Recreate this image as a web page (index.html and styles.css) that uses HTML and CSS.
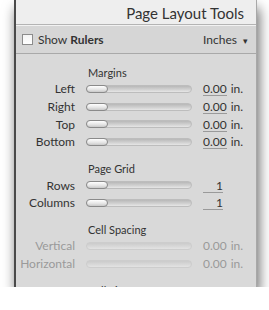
FILE: index.html
```html
<!DOCTYPE html>
<html lang="en">
<head>
    <meta charset="UTF-8">
    <title>Page Layout Tools</title>
    <link rel="stylesheet" href="styles.css">
</head>
<body>

    <div class="panel">
        <div class="titlebar">Page Layout Tools</div>

        <div class="toolbar">
            <label class="check"><span class="box"></span>Show <b>Rulers</b></label>
            <span class="units">Inches <span class="arrow">&#9662;</span></span>
        </div>

        <div class="section first">
            <div class="heading">Margins</div>
            <div class="row">
                <span class="label">Left</span>
                <span class="track"><span class="thumb"></span></span>
                <span class="value"><span class="num">0.00</span><span class="unit">in.</span></span>
            </div>
            <div class="row">
                <span class="label">Right</span>
                <span class="track"><span class="thumb"></span></span>
                <span class="value"><span class="num">0.00</span><span class="unit">in.</span></span>
            </div>
            <div class="row">
                <span class="label">Top</span>
                <span class="track"><span class="thumb"></span></span>
                <span class="value"><span class="num">0.00</span><span class="unit">in.</span></span>
            </div>
            <div class="row">
                <span class="label">Bottom</span>
                <span class="track"><span class="thumb"></span></span>
                <span class="value"><span class="num">0.00</span><span class="unit">in.</span></span>
            </div>
        </div>

        <div class="section">
            <div class="heading">Page Grid</div>
            <div class="row">
                <span class="label">Rows</span>
                <span class="track"><span class="thumb"></span></span>
                <span class="value"><span class="num">1</span></span>
            </div>
            <div class="row">
                <span class="label">Columns</span>
                <span class="track"><span class="thumb"></span></span>
                <span class="value"><span class="num">1</span></span>
            </div>
        </div>

        <div class="section disabled">
            <div class="heading">Cell Spacing</div>
            <div class="row">
                <span class="label">Vertical</span>
                <span class="track"></span>
                <span class="value">0.00<span class="unit">in.</span></span>
            </div>
            <div class="row">
                <span class="label">Horizontal</span>
                <span class="track"></span>
                <span class="value">0.00<span class="unit">in.</span></span>
            </div>
        </div>

        <div class="section">
            <div class="heading">Cell Size</div>
        </div>
    </div>

</body>
</html>
```

FILE: styles.css
```css
body {
    margin: 0;
    background-color: #ffffff;
    font-family: Lato, "Open Sans", sans-serif;
    color: #333333;
}
.panel {
    margin-left: 14px;
    width: 240px;
    height: 287px;
    overflow: hidden;
    background-color: #d9d9d9;
    border-left: 2px solid #4a4a4a;
    border-right: 1px solid #a8a8a8;
    box-shadow: 2px 8px 12px rgba(0, 0, 0, 0.6);
}
.titlebar {
    height: 24px;
    line-height: 26px;
    padding-right: 12px;
    text-align: right;
    font-size: 15px;
    color: #333333;
    background-color: #eeeeee;
    border-bottom: 1px solid #b4b4b4;
}
.toolbar {
    height: 27px;
    display: flex;
    align-items: center;
    justify-content: space-between;
    padding: 0 8px 0 6px;
    font-size: 12px;
    background-color: #d6d6d6;
    border-top: 1px solid #f2f2f2;
    border-bottom: 1px solid #a9a9a9;
}
.check {
    display: flex;
    align-items: center;
}
.check b {
    margin-left: 3px;
}
.box {
    width: 9px;
    height: 9px;
    margin-right: 5px;
    background: linear-gradient(#f4f4f4, #ffffff);
    border: 1px solid #8c8c8c;
}
.units .arrow {
    font-size: 9px;
    margin-left: 3px;
}
.section {
    margin-top: 11.5px;
}
.section.first {
    margin-top: 0;
    padding-top: 12px;
}
.heading {
    height: 14px;
    line-height: 14px;
    margin-left: 72px;
    font-size: 11px;
    color: #333333;
}
.row {
    display: grid;
    grid-template-columns: 59px 106px auto;
    column-gap: 11px;
    align-items: center;
    height: 17.7px;
    font-size: 12px;
}
.label {
    text-align: right;
}
.track {
    position: relative;
    height: 6px;
    border-radius: 4px;
    border: 1px solid #bdbdbd;
    background: linear-gradient(#b8b8b8, #d2d2d2 60%, #e6e6e6);
}
.thumb {
    position: absolute;
    left: -1px;
    top: -1px;
    width: 20px;
    height: 6px;
    border-radius: 4px;
    border: 1px solid #8a8a8a;
    background: linear-gradient(#ffffff, #e4e4e4 60%, #c9c9c9);
}
.value {
    color: #333333;
}
.num {
    display: inline-block;
    min-width: 20px;
    text-align: right;
    border-bottom: 1px solid #9a9a9a;
    line-height: 13px;
}
.unit {
    margin-left: 4px;
}
.disabled .label,
.disabled .value {
    color: #9a9a9a;
}
.disabled .track {
    border-color: #cdcdcd;
    background: linear-gradient(#cbcbcb, #d9d9d9 60%, #e3e3e3);
}
```
